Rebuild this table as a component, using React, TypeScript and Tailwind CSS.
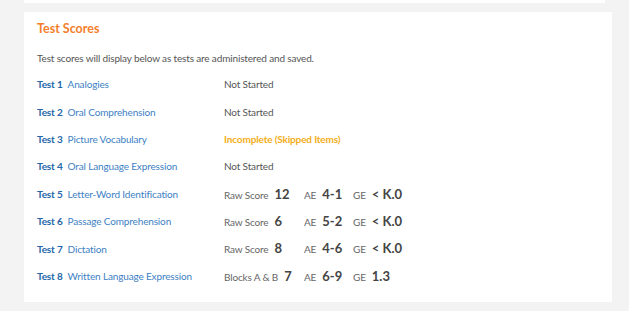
type Score = { label: string; value: string; ae: string; ge: string };

type Test = {
  num: number;
  name: string;
  status?: "not" | "incomplete";
  score?: Score;
};

const tests: Test[] = [
  { num: 1, name: "Analogies", status: "not" },
  { num: 2, name: "Oral Comprehension", status: "not" },
  { num: 3, name: "Picture Vocabulary", status: "incomplete" },
  { num: 4, name: "Oral Language Expression", status: "not" },
  { num: 5, name: "Letter-Word Identification", score: { label: "Raw Score", value: "12", ae: "4-1", ge: "< K.0" } },
  { num: 6, name: "Passage Comprehension", score: { label: "Raw Score", value: "6", ae: "5-2", ge: "< K.0" } },
  { num: 7, name: "Dictation", score: { label: "Raw Score", value: "8", ae: "4-6", ge: "< K.0" } },
  { num: 8, name: "Written Language Expression", score: { label: "Blocks A & B", value: "7", ae: "6-9", ge: "1.3" } },
];

function ScoreCells({ score }: { score: Score }) {
  return (
    <div className="flex items-baseline">
      <div className="flex w-[80px] items-baseline gap-[6px]">
        <span className="text-[10px] tracking-[-0.15px] text-[#666]">{score.label}</span>
        <span className="text-[13px] font-bold text-[#444]">{score.value}</span>
      </div>
      <div className="flex w-[49px] items-baseline gap-[6px]">
        <span className="text-[10px] tracking-[-0.15px] text-[#666]">AE</span>
        <span className="text-[13px] font-bold text-[#444]">{score.ae}</span>
      </div>
      <div className="flex items-baseline gap-[6px]">
        <span className="text-[10px] tracking-[-0.15px] text-[#666]">GE</span>
        <span className="text-[13px] font-bold text-[#444]">{score.ge}</span>
      </div>
    </div>
  );
}

export default function App() {
  return (
    <div
      className="min-h-[311px] w-[629px] bg-[#f3f3f3] px-[24px]"
      style={{ fontFamily: "Lato, 'Open Sans', sans-serif" }}
    >
      <div className="h-[3px] bg-white" />
      <div className="mt-[9px] h-[290px] w-[588px] bg-white px-[13px] pt-[8px]">
        <h2 className="text-[12.5px] font-bold leading-[18px] text-[#f37f2c]">Test Scores</h2>
        <p className="mt-[13px] text-[10px] leading-[14px] tracking-[-0.15px] text-[#555]">
          Test scores will display below as tests are administered and saved.
        </p>
        <div className="mt-[6px] flex flex-col">
          {tests.map((t) => (
            <div key={t.num} className="flex h-[27.4px] items-center">
              <div className="flex w-[187px] items-baseline gap-[5px] text-[10px] tracking-[-0.15px]">
                <span className="font-bold text-[#2466a8]">Test {t.num}</span>
                <span className="text-[#3d7fc4]">{t.name}</span>
              </div>
              {t.status === "not" && (
                <span className="text-[10px] tracking-[-0.15px] text-[#555]">Not Started</span>
              )}
              {t.status === "incomplete" && (
                <span className="text-[10px] font-bold tracking-[-0.15px] text-[#f3ad17]">
                  Incomplete (Skipped Items)
                </span>
              )}
              {t.score && <ScoreCells score={t.score} />}
            </div>
          ))}
        </div>
      </div>
    </div>
  );
}
